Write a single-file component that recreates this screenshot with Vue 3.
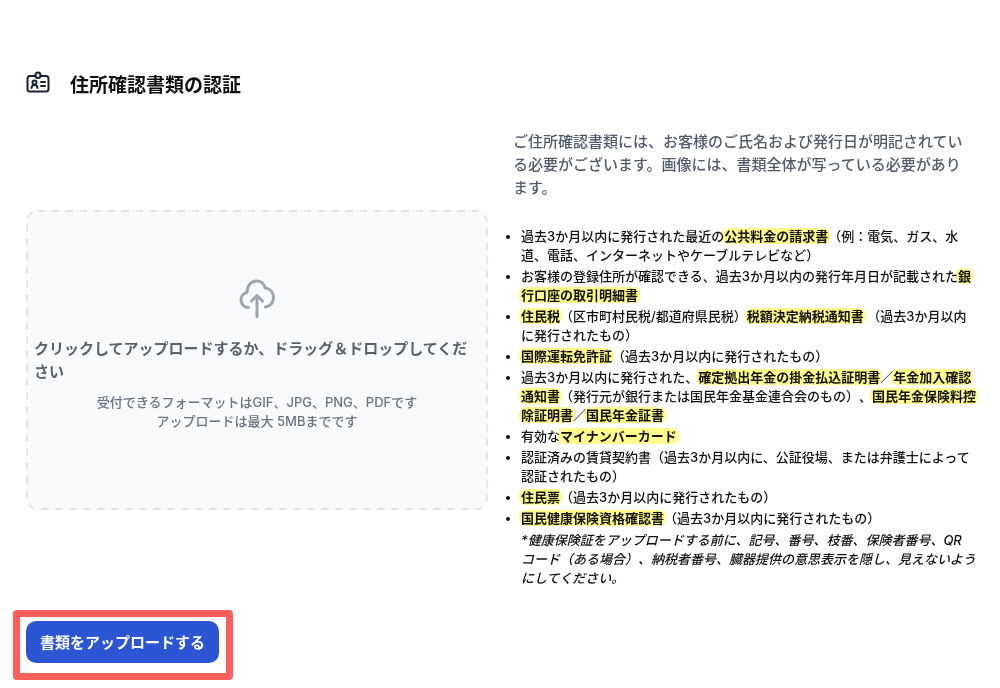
<template>
  <main class="verify-page">
    <header class="verify-header">
      <svg class="badge-icon" viewBox="0 0 24 24" fill="none" stroke="currentColor" stroke-width="2" stroke-linecap="round" stroke-linejoin="round">
        <path d="M9.5 5H4a2.5 2.5 0 0 0-2.500 2.500v10.500A2.500 2.500 0 0 0 4 20.500h16a2.500 2.500 0 0 0 2.500-2.500V7.500A2.500 2.500 0 0 0 20 5h-5.500"/>
        <rect x="9.500" y="1.500" width="5" height="5.500" rx="2.500"/>
        <circle cx="8.500" cy="11.500" r="2"/>
        <path d="M5.500 17c.2-2 1.300-3 3-3s2.800 1 3 3M15 11h4M15 15h4"/>
      </svg>
      <h1>住所確認書類の認証</h1>
    </header>

    <section class="verify-body">
      <label class="dropzone" for="address-file">
        <svg class="dropzone-border" aria-hidden="true">
          <rect x="1" y="1" rx="11"/>
        </svg>
        <input id="address-file" class="file-input" type="file" accept=".gif,.jpg,.png,.pdf" @change="onFileChange">
        <svg class="cloud-icon" viewBox="0 0 36 40" fill="none" stroke="currentColor" stroke-width="3" stroke-linecap="round" stroke-linejoin="round">
          <path d="M9.500 28.500C5.200 28.500 2 25.200 2 21c0-4 2.600-7 6-7.500C7.800 7 12 2 17.500 2c4.300 0 7.800 2.900 8.700 7C31 9.600 34.500 13.300 34.500 18.500c0 5-3.300 9-8 9.500"/>
          <path d="M18 37.500V16.500M12.500 22l5.500-5.500 5.500 5.500"/>
        </svg>
        <span class="dropzone-title">クリックしてアップロードするか、ドラッグ＆ドロップしてください</span>
        <span class="dropzone-hint">受付できるフォーマットはGIF、JPG、PNG、PDFです<br>アップロードは最大 5MBまでです</span>
      </label>

      <div class="guide">
        <p class="guide-intro">ご住所確認書類には、お客様のご氏名および発行日が明記されている必要がございます。画像には、書類全体が写っている必要があります。</p>
        <ul class="doc-list">
          <li v-for="(parts, i) in documents" :key="i">
            <template v-for="(part, j) in parts" :key="j">
              <mark v-if="part.hl">{{ part.hl }}</mark>
              <template v-else>{{ part }}</template>
            </template>
          </li>
        </ul>
        <p class="guide-note">*健康保険証をアップロードする前に、記号、番号、枝番、保険者番号、QR<br>コード（ある場合）、納税者番号、臓器提供の意思表示を隠し、見えないようにしてください。</p>
      </div>
    </section>

    <div class="submit-frame">
      <button type="button" class="submit-btn">書類をアップロードする</button>
    </div>
  </main>
</template>

<script setup>
import { ref } from 'vue'

const selectedFile = ref(null)

// Each entry is one bullet; { hl } parts are drawn with the highlighter
const documents = [
  ['過去3か月以内に発行された最近の', { hl: '公共料金の請求書' }, '（例：電気、ガス、水道、電話、インターネットやケーブルテレビなど）'],
  ['お客様の登録住所が確認できる、過去3か月以内の発行年月日が記載された', { hl: '銀行口座の取引明細書' }],
  [{ hl: '住民税' }, '（区市町村民税/都道府県民税）', { hl: '税額決定納税通知書' }, ' （過去3か月以内に発行されたもの）'],
  [{ hl: '国際運転免許証' }, '（過去3か月以内に発行されたもの）'],
  ['過去3か月以内に発行された、', { hl: '確定拠出年金の掛金払込証明書' }, '／', { hl: '年金加入確認通知書' }, '（発行元が銀行または国民年金基金連合会のもの）、', { hl: '国民年金保険料控除証明書' }, '／', { hl: '国民年金証書' }],
  ['有効な', { hl: 'マイナンバーカード' }],
  ['認証済みの賃貸契約書（過去3か月以内に、公証役場、または弁護士によって認証されたもの）'],
  [{ hl: '住民票' }, '（過去3か月以内に発行されたもの）'],
  [{ hl: '国民健康保険資格確認書' }, '（過去3か月以内に発行されたもの）'],
]

function onFileChange(e) {
  selectedFile.value = e.target.files[0] || null
}
</script>

<style>
body {
  background: #fff;
}
</style>

<style scoped>
.verify-page {
  padding: 70px 22px 8px 26px;
  font-family: Inter, "Noto Sans CJK JP", sans-serif;
  font-weight: 500;
  color: #111;
  text-spacing-trim: space-all;
}

/* Header */
.verify-header {
  display: flex;
  align-items: center;
  gap: 20px;
  height: 30px;
  margin-bottom: 30px;
}

.badge-icon {
  width: 24px;
  height: 24px;
  margin-bottom: 4px;
  color: #1a2133;
}

.verify-header h1 {
  margin: 0;
  padding-top: 2px;
  font-size: 19px;
  font-weight: 700;
  line-height: 30px;
  color: #111;
}

.verify-body {
  display: grid;
  grid-template-columns: 462fr 475fr;
  gap: 15px;
  align-items: center;
}

/* Upload area */
.dropzone {
  position: relative;
  display: flex;
  flex-direction: column;
  align-items: center;
  justify-content: center;
  box-sizing: border-box;
  min-height: 300px;
  padding: 0 8px 10px;
  background: #f9fafc;
  border-radius: 12px;
  cursor: pointer;
}

.dropzone-border {
  position: absolute;
  inset: 0;
  width: 100%;
  height: 100%;
}

.dropzone-border rect {
  width: calc(100% - 2px);
  height: calc(100% - 2px);
  fill: none;
  stroke: #e3e5e8;
  stroke-width: 2px;
  stroke-dasharray: 7 7;
}

.file-input {
  position: absolute;
  width: 1px;
  height: 1px;
  opacity: 0;
}

.cloud-icon {
  width: 36px;
  height: 40px;
  margin-bottom: 18px;
  color: #9ea4b0;
}

.dropzone-title {
  align-self: stretch;
  margin-bottom: 10px;
  font-size: 15px;
  font-weight: 700;
  line-height: 23px;
  color: #5a616d;
}

.dropzone-hint {
  font-size: 13px;
  line-height: 19px;
  text-align: center;
  color: #6c7280;
}

/* Guide text */
.guide {
  padding-bottom: 2px;
}

.guide-intro {
  margin: 0 0 28px;
  padding: 0 12px 0 10px;
  font-size: 15px;
  line-height: 23px;
  color: #525b69;
}

.doc-list {
  margin: 0;
  padding-left: 18px;
  font-size: 13px;
  line-height: 19px;
}

.doc-list li {
  margin-bottom: 2px;
}

.doc-list mark {
  color: inherit;
  background: #fffc8c;
  border-radius: 6px;
  box-shadow: 2px 0 0 #fffc8c, -2px 0 0 #fffc8c;
  -webkit-box-decoration-break: clone;
  box-decoration-break: clone;
  font-weight: 700;
  mix-blend-mode: multiply;
}

.guide-note {
  margin: 3px 0 0;
  padding-left: 18px;
  font-size: 13px;
  font-style: italic;
  line-height: 19px;
}

/* Submit */
.submit-frame {
  width: fit-content;
  margin: 20px 0 0 -13px;
  padding: 4px 7px 10px 6px;
  border: 7px solid #ff5f5c;
  border-radius: 4px;
}

.submit-btn {
  display: block;
  height: 42px;
  padding: 0 14px 2px;
  border: none;
  border-radius: 10px;
  background: #2b55d3;
  color: #fff;
  font-family: inherit;
  font-size: 15px;
  font-weight: 700;
  cursor: pointer;
}
</style>
